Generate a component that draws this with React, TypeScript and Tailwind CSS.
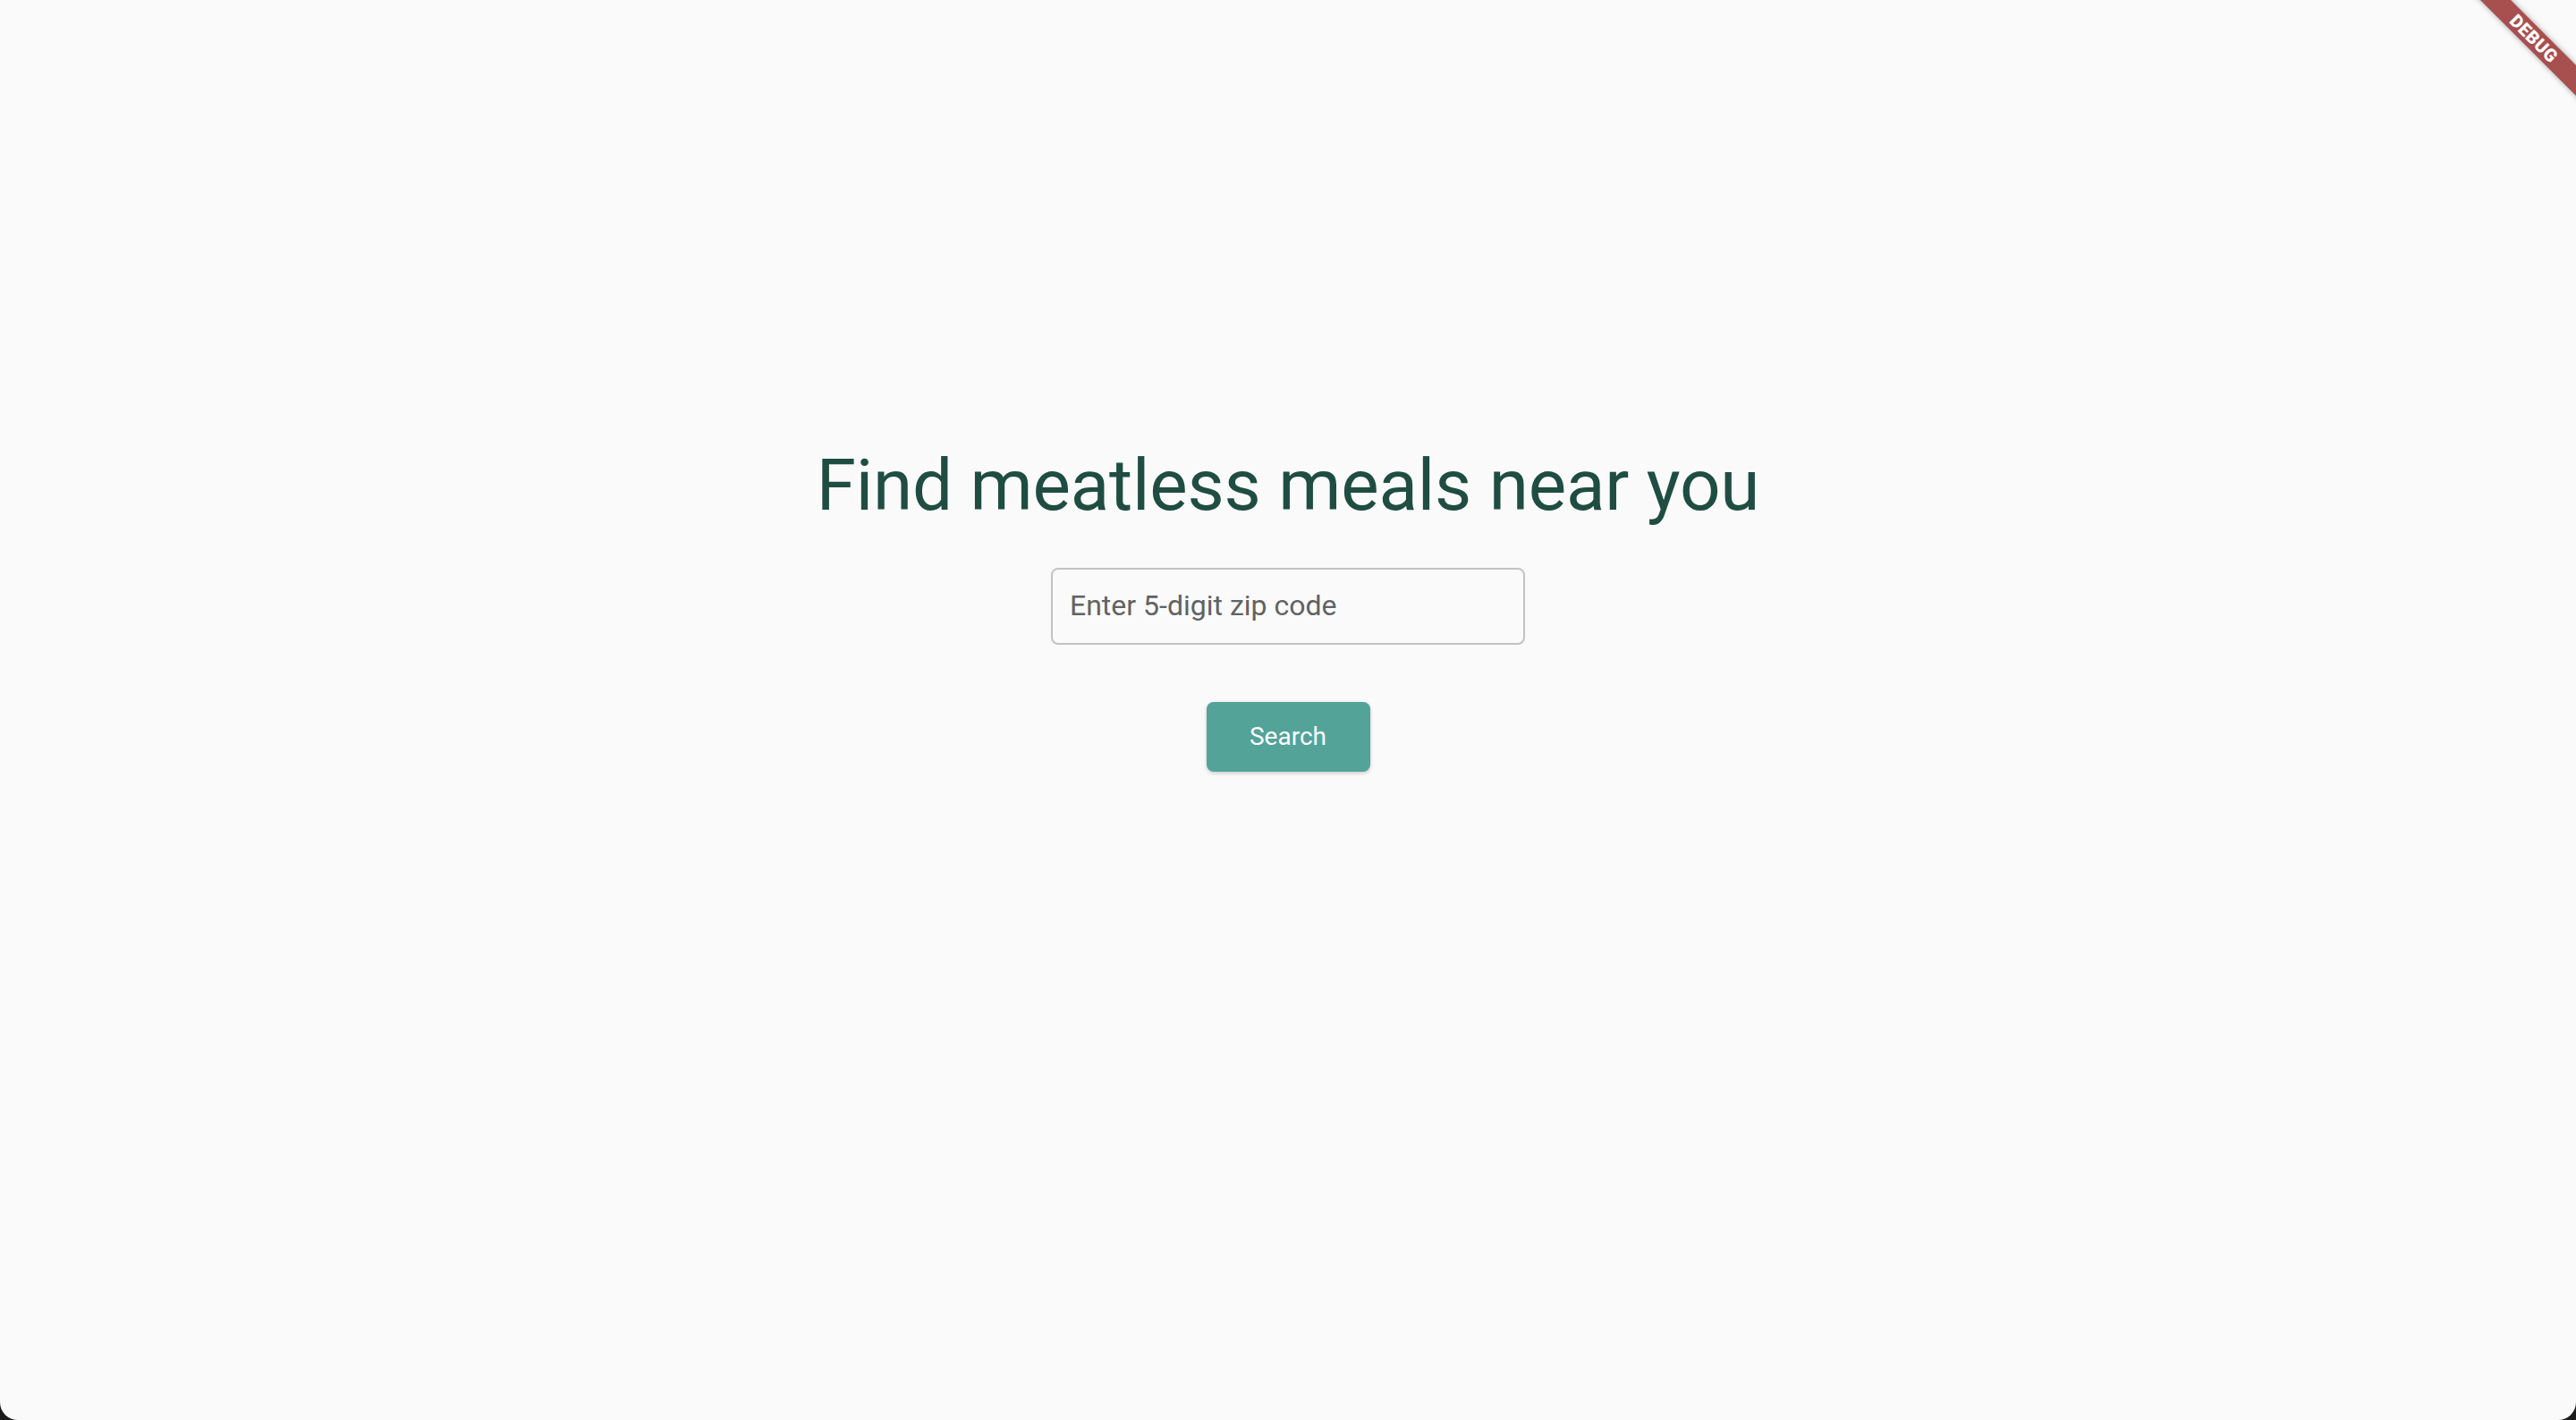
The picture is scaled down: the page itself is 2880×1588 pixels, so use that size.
import React from "react";

const DebugBanner = () => (
  <div className="pointer-events-none absolute inset-0 overflow-hidden">
    <div className="absolute left-[2733px] top-[31px] flex h-[24px] w-[200px] rotate-45 items-center justify-center bg-[#a84f4f] shadow-[0_0_6px_rgba(0,0,0,0.35)]">
      <span className="text-[20px] font-black leading-none tracking-[0.5px] text-white [font-family:Roboto,'Liberation_Sans',sans-serif]">
        DEBUG
      </span>
    </div>
  </div>
);

const App = () => {
  return (
    <div className="h-[1588px] w-[2880px] bg-[#1c1c1c] [font-family:Roboto,'Liberation_Sans',sans-serif]">
      <div className="relative flex h-full w-full flex-col items-center rounded-b-[20px] bg-[#fafafa] pt-[503px]">
        <h1 className="text-[80px] font-normal leading-[80px] tracking-[-0.2px] text-[#1f4d41]">
          Find meatless meals near you
        </h1>
        <input
          type="text"
          placeholder="Enter 5-digit zip code"
          className="mt-[52px] h-[86px] w-[530px] rounded-[8px] border-2 border-[#c2c2c2] bg-transparent px-[19px] pb-[3px] text-[32px] text-[#222] outline-none placeholder:text-[#626262]"
        />
        <button className="mt-[64px] h-[78px] w-[183px] rounded-[8px] bg-[#53a399] text-[28px] font-normal text-white shadow-[0_2px_4px_rgba(0,0,0,0.18)]">
          Search
        </button>
        <DebugBanner />
      </div>
    </div>
  );
};

export default App;
